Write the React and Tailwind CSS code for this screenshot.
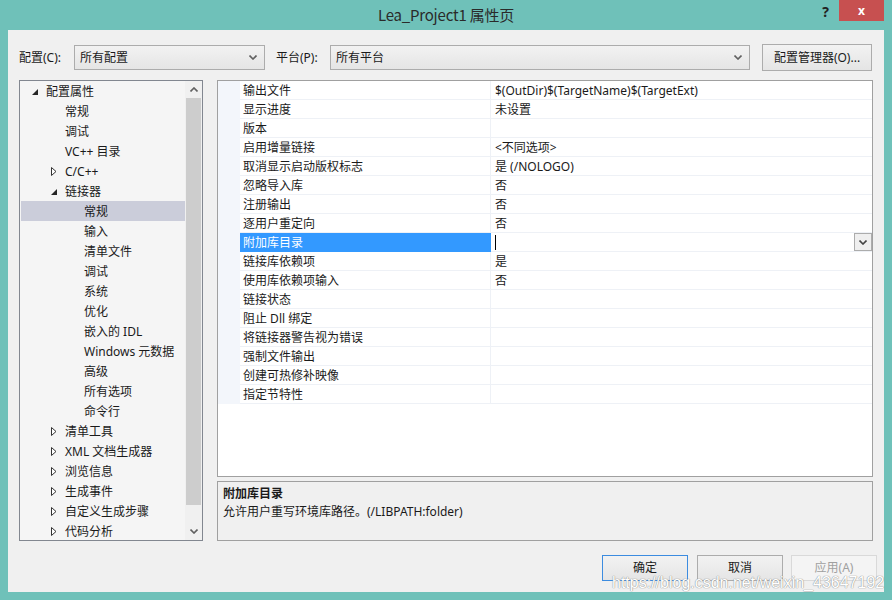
import { useState } from 'react';

const FONT = { fontFamily: '"Noto Sans", "Noto Sans CJK SC", sans-serif' };

const TREE = [
  { label: '配置属性', level: 0, exp: 'open' },
  { label: '常规', level: 1 },
  { label: '调试', level: 1 },
  { label: 'VC++ 目录', level: 1 },
  { label: 'C/C++', level: 1, exp: 'closed' },
  { label: '链接器', level: 1, exp: 'open' },
  { label: '常规', level: 2, selected: true },
  { label: '输入', level: 2 },
  { label: '清单文件', level: 2 },
  { label: '调试', level: 2 },
  { label: '系统', level: 2 },
  { label: '优化', level: 2 },
  { label: '嵌入的 IDL', level: 2 },
  { label: 'Windows 元数据', level: 2 },
  { label: '高级', level: 2 },
  { label: '所有选项', level: 2 },
  { label: '命令行', level: 2 },
  { label: '清单工具', level: 1, exp: 'closed' },
  { label: 'XML 文档生成器', level: 1, exp: 'closed' },
  { label: '浏览信息', level: 1, exp: 'closed' },
  { label: '生成事件', level: 1, exp: 'closed' },
  { label: '自定义生成步骤', level: 1, exp: 'closed' },
  { label: '代码分析', level: 1, exp: 'closed' },
];

const INDENT = ['pl-[10px]', 'pl-[29px]', 'pl-[48px]'];

const PROPS = [
  ['输出文件', '$(OutDir)$(TargetName)$(TargetExt)'],
  ['显示进度', '未设置'],
  ['版本', ''],
  ['启用增量链接', '<不同选项>'],
  ['取消显示启动版权标志', '是 (/NOLOGO)'],
  ['忽略导入库', '否'],
  ['注册输出', '否'],
  ['逐用户重定向', '否'],
  ['附加库目录', '', true],
  ['链接库依赖项', '是'],
  ['使用库依赖项输入', '否'],
  ['链接状态', ''],
  ['阻止 Dll 绑定', ''],
  ['将链接器警告视为错误', ''],
  ['强制文件输出', ''],
  ['创建可热修补映像', ''],
  ['指定节特性', ''],
];

function Chevron({ up = false, color = '#606060' }) {
  return (
    <svg width="8" height="5" viewBox="0 0 8 5">
      <path
        d={up ? 'M0.5 4.5 L4 1 L7.5 4.5' : 'M0.5 0.5 L4 4 L7.5 0.5'}
        fill="none"
        stroke={color}
        strokeWidth="1.6"
      />
    </svg>
  );
}

function Expander({ state }) {
  if (state === 'open') {
    return (
      <svg width="15" height="12" viewBox="0 0 15 12" className="shrink-0">
        <path d="M7 3 L7 9 L1 9 Z" fill="#262626" />
      </svg>
    );
  }
  if (state === 'closed') {
    return (
      <svg width="15" height="12" viewBox="0 0 15 12" className="shrink-0">
        <path d="M1.5 1.5 L6 5.5 L1.5 9.5 Z" fill="#fff" stroke="#333" strokeWidth="1" />
      </svg>
    );
  }
  return <span className="w-[15px] shrink-0" />;
}

function Dropdown({ width, text }) {
  return (
    <div
      className={`${width} h-[25px] flex items-center justify-between border border-[#acacac] bg-gradient-to-b from-[#f2f2f2] to-[#e5e5e5] pl-[5px] pr-[7px]`}
    >
      <span className="text-[12px] text-[#1a1a1a]">{text}</span>
      <Chevron />
    </div>
  );
}

export default function App() {
  const [sel] = useState(8);
  return (
    <div className="w-[892px] h-[600px] bg-[#6fc1b9] flex flex-col relative overflow-hidden" style={FONT}>
      {/* title bar */}
      <div className="h-[30px] relative flex items-center justify-center">
        <span
          className="text-[15px] text-[#2a2a2a] tracking-[-0.2px]"
          style={{ fontFamily: '"Liberation Sans Narrow", "Noto Sans CJK SC", sans-serif' }}
        >
          Lea_Project1 属性页
        </span>
        <div className="absolute right-[8px] top-0 flex items-start">
          <span className="text-[14px] font-bold text-[#222] mr-[10px] mt-[1px]">?</span>
          <div className="w-[45px] h-[21px] bg-[#c75050] flex items-center justify-center text-white text-[12px] font-bold">
            x
          </div>
        </div>
      </div>

      {/* client area */}
      <div className="mx-[8px] mb-[8px] flex-1 bg-[#f0f0f0] flex flex-col px-[11px] text-[12px] text-[#1a1a1a]">
        {/* config row */}
        <div className="mt-[14px] h-[27px] flex items-center">
          <span className="w-[55px]">配置(C):</span>
          <Dropdown width="w-[191px]" text="所有配置" />
          <span className="ml-[11px] w-[54px]">平台(P):</span>
          <Dropdown width="w-[420px]" text="所有平台" />
          <div className="ml-[12px] w-[110px] h-[27px] border border-[#acacac] bg-gradient-to-b from-[#f2f2f2] to-[#e5e5e5] flex items-center justify-center">
            配置管理器(O)...
          </div>
        </div>

        {/* main area */}
        <div className="mt-[9px] h-[461px] flex gap-[14px]">
          {/* tree */}
          <div className="w-[184px] border border-[#828790] bg-[#f5f5f5] flex">
            <div className="flex-1 flex flex-col pl-[1px] overflow-hidden">
              {TREE.map((t, i) => (
                <div
                  key={i}
                  className={`h-[20px] shrink-0 pt-[2px] flex items-center ${INDENT[t.level]} ${
                    t.selected ? 'bg-[#cbcdda]' : ''
                  }`}
                >
                  <Expander state={t.exp} />
                  <span className="whitespace-nowrap">{t.label}</span>
                </div>
              ))}
            </div>
            <div className="w-[17px] flex flex-col bg-[#f0f0f0]">
              <div className="h-[17px] flex items-center justify-center">
                <Chevron up />
              </div>
              <div className="h-[407px] mx-[1px] bg-[#cdcdcd]" />
              <div className="flex-1" />
              <div className="h-[17px] flex items-center justify-center">
                <Chevron />
              </div>
            </div>
          </div>

          {/* right side */}
          <div className="flex-1 flex flex-col gap-[4px]">
            <div className="h-[397px] border border-[#a0a0a0] bg-white flex flex-col">
              {PROPS.map(([name, value], i) => {
                const active = i === sel;
                return (
                  <div key={i} className="h-[19px] flex">
                    <div className="w-[22px] bg-[#f3f6fb]" />
                    <div
                      className={`w-[251px] pl-[3px] pt-[2px] flex items-center border-b border-r ${
                        active
                          ? 'bg-[#3399ff] text-white border-[#3399ff]'
                          : 'border-[#eef1f6]'
                      }`}
                    >
                      {name}
                    </div>
                    <div className="flex-1 pl-[4px] flex items-center justify-between border-b border-[#eef1f6]">
                      {active ? (
                        <>
                          <span className="w-[1px] h-[15px] bg-black" />
                          <div className="w-[18px] h-[18px] border border-[#acacac] bg-[#efefef] flex items-center justify-center">
                            <Chevron color="#444" />
                          </div>
                        </>
                      ) : (
                        <span className="whitespace-nowrap pt-[2px]">{value}</span>
                      )}
                    </div>
                  </div>
                );
              })}
            </div>
            <div className="h-[60px] border border-[#a0a0a0] bg-[#f0f0f0] pl-[5px] pt-[3px] flex flex-col">
              <span className="font-bold h-[18px] leading-[18px]">附加库目录</span>
              <span className="h-[18px] leading-[18px]">允许用户重写环境库路径。(/LIBPATH:folder)</span>
            </div>
          </div>
        </div>

        {/* buttons */}
        <div className="mt-[14px] h-[26px] flex justify-end mr-[-4px]">
          <div className="w-[86px] h-[26px] border border-[#3c8ce0] bg-gradient-to-b from-[#f2f2f2] to-[#e5e5e5] flex items-center justify-center">
            确定
          </div>
          <div className="ml-[9px] w-[86px] h-[26px] border border-[#acacac] bg-gradient-to-b from-[#f2f2f2] to-[#e5e5e5] flex items-center justify-center">
            取消
          </div>
          <div className="ml-[8px] w-[86px] h-[26px] border border-[#d9d9d9] bg-[#f4f4f4] flex items-center justify-center text-[#a0a0a0]">
            应用(A)
          </div>
        </div>
      </div>

      {/* watermark */}
      <div
        className="absolute left-[612px] top-[571px] text-[16px] text-white whitespace-nowrap pointer-events-none"
        style={{
          fontFamily: '"Liberation Sans", sans-serif',
          textShadow: '0 0 1px #8c8c8c, 0 0 1px #8c8c8c',
        }}
      >
        https://blog.csdn.net/weixin_43647192
      </div>
    </div>
  );
}
